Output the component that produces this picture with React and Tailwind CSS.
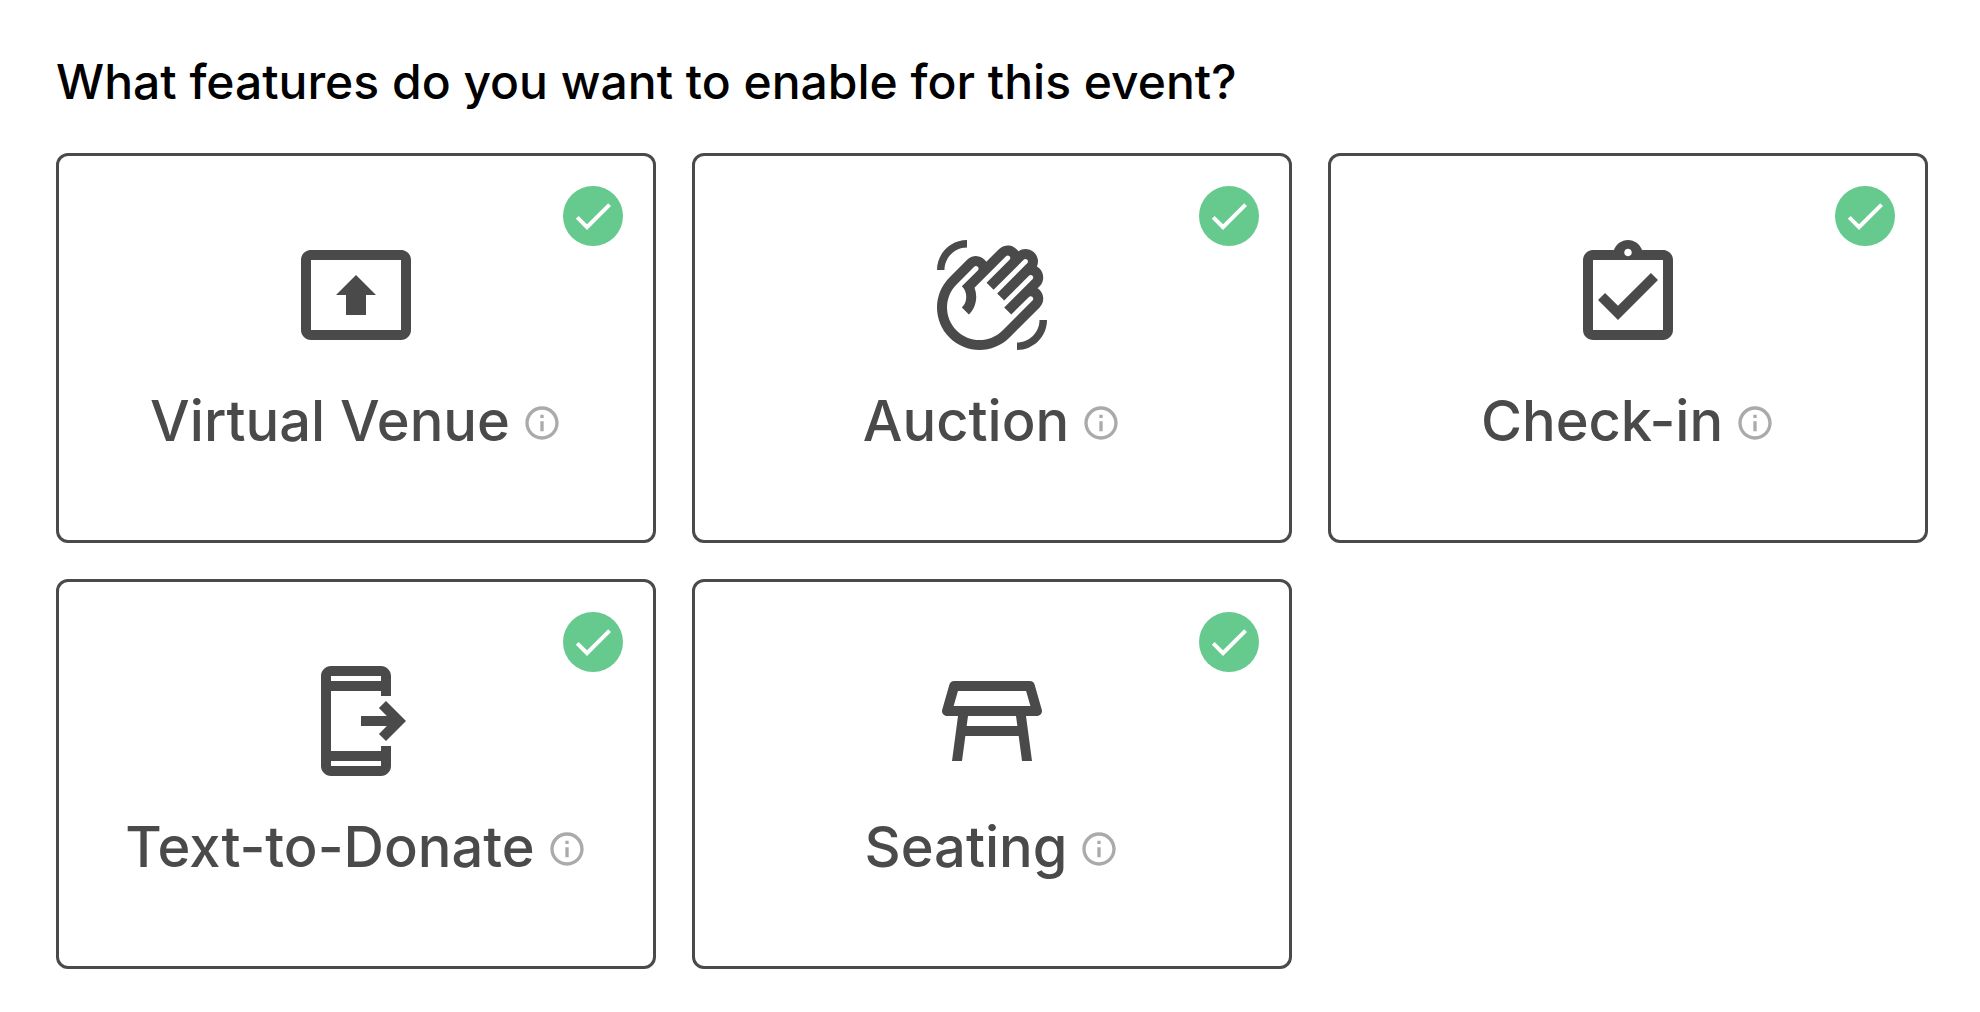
import { useState } from 'react';
import {
  MdCheck,
  MdInfoOutline,
  MdOutlineAssignmentTurnedIn,
  MdOutlinePresentToAll,
  MdOutlineSendToMobile,
  MdOutlineTableRestaurant,
  MdOutlineWavingHand,
} from 'react-icons/md';

const FEATURES = [
  { id: 'virtual-venue', name: 'Virtual Venue', Icon: MdOutlinePresentToAll },
  { id: 'auction', name: 'Auction', Icon: MdOutlineWavingHand },
  { id: 'check-in', name: 'Check-in', Icon: MdOutlineAssignmentTurnedIn },
  { id: 'text-to-donate', name: 'Text-to-Donate', Icon: MdOutlineSendToMobile },
  { id: 'seating', name: 'Seating', Icon: MdOutlineTableRestaurant },
];

function FeatureCard({ id, name, Icon, checked, onToggle }) {
  return (
    <li className="relative flex flex-col items-center rounded-xl border-3 border-[#4a4a4a] pt-[79px] pb-[83px] text-[#4a4a4a]">
      <span className="absolute top-[30px] right-[30px] flex size-[60px] items-center justify-center">
        <input
          id={id}
          type="checkbox"
          checked={checked}
          onChange={onToggle}
          className="absolute inset-0 cursor-pointer appearance-none rounded-full border-3 border-[#aaaaaa] checked:border-0 checked:bg-[#66c98d]"
        />
        {checked && <MdCheck className="pointer-events-none relative size-12 text-white" />}
      </span>

      <Icon className="size-[120px]" />

      <div className="mt-[34px] flex items-center gap-3">
        <label htmlFor={id} className="cursor-pointer pb-1 text-[56px] leading-[64px] font-medium">
          {name}
        </label>
        <button type="button" aria-label={`About ${name}`} className="cursor-pointer text-[#aaaaaa]">
          <MdInfoOutline className="size-10" />
        </button>
      </div>
    </li>
  );
}

export default function App() {
  const [enabled, setEnabled] = useState(FEATURES.map((feature) => feature.id));

  const toggle = (id) =>
    setEnabled((prev) => (prev.includes(id) ? prev.filter((x) => x !== id) : [...prev, id]));

  return (
    <main className="min-h-screen bg-white pt-[50px] pr-[52px] pb-10 pl-14 font-['Inter',sans-serif]">
      <h1 className="text-5xl leading-[64px] font-medium text-black">
        What features do you want to enable for this event?
      </h1>

      <ul className="mt-[39px] grid grid-cols-3 gap-9">
        {FEATURES.map((feature) => (
          <FeatureCard
            key={feature.id}
            {...feature}
            checked={enabled.includes(feature.id)}
            onToggle={() => toggle(feature.id)}
          />
        ))}
      </ul>
    </main>
  );
}
